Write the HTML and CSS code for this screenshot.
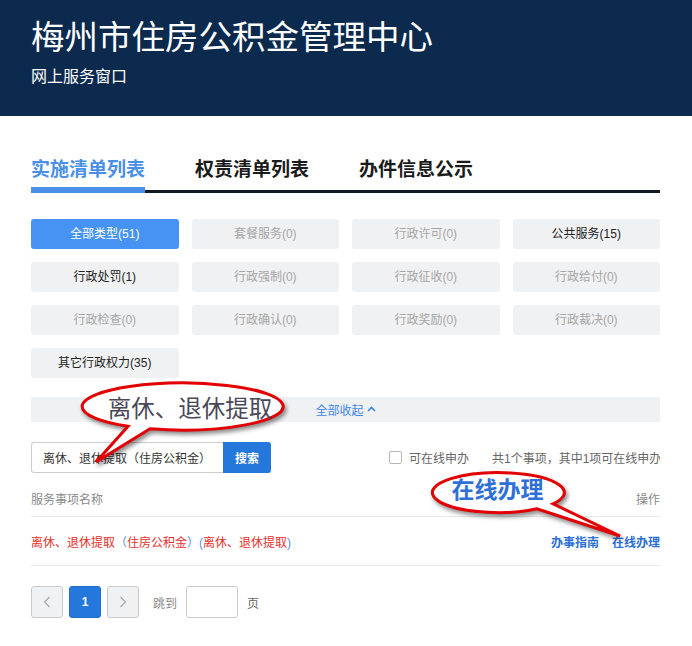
FILE: index.html
```html
<!DOCTYPE html>
<html lang="zh-CN">
<head>
<meta charset="utf-8">
<title>梅州市住房公积金管理中心 - 网上服务窗口</title>
<link rel="stylesheet" href="styles.css">
</head>
<body>
<header class="site-header">
  <h1 class="site-title">梅州市住房公积金管理中心</h1>
  <p class="site-sub">网上服务窗口</p>
</header>
<main class="main">
  <nav class="tabs">
    <a class="tab active">实施清单列表</a>
    <a class="tab">权责清单列表</a>
    <a class="tab">办件信息公示</a>
  </nav>
  <div class="filters">
    <button class="chip active">全部类型(51)</button>
    <button class="chip off">套餐服务(0)</button>
    <button class="chip off">行政许可(0)</button>
    <button class="chip">公共服务(15)</button>
    <button class="chip">行政处罚(1)</button>
    <button class="chip off">行政强制(0)</button>
    <button class="chip off">行政征收(0)</button>
    <button class="chip off">行政给付(0)</button>
    <button class="chip off">行政检查(0)</button>
    <button class="chip off">行政确认(0)</button>
    <button class="chip off">行政奖励(0)</button>
    <button class="chip off">行政裁决(0)</button>
    <button class="chip">其它行政权力(35)</button>
  </div>
  <div class="collapse">全部收起<svg class="chev-up" width="9" height="6" viewBox="0 0 9 6"><path d="M1 5 L4.5 1.5 L8 5" fill="none" stroke="currentColor" stroke-width="1.6"/></svg></div>
  <div class="search-row">
    <div class="search">
      <input class="search-input" type="text" value="离休、退休提取（住房公积金）" readonly>
      <button class="search-btn">搜索</button>
    </div>
    <div class="search-meta">
      <label class="check"><span class="box"></span>可在线申办</label>
      <span class="count">共1个事项，其中1项可在线申办</span>
    </div>
  </div>
  <div class="table">
    <div class="thead"><span>服务事项名称</span><span>操作</span></div>
    <div class="trow">
      <span class="name">离休、退休提取<span class="paren">（</span>住房公积金<span class="paren">）(</span>离休、退休提取<span class="paren">)</span></span>
      <span class="ops"><a class="op">办事指南</a><a class="op">在线办理</a></span>
    </div>
  </div>
  <div class="pager">
    <button class="pg-btn"><svg width="8" height="12" viewBox="0 0 8 12"><path d="M6.5 1 L1.5 6 L6.5 11" fill="none" stroke="#a8a8a8" stroke-width="1.2"/></svg></button>
    <button class="pg-btn current">1</button>
    <button class="pg-btn"><svg width="8" height="12" viewBox="0 0 8 12"><path d="M1.5 1 L6.5 6 L1.5 11" fill="none" stroke="#a8a8a8" stroke-width="1.2"/></svg></button>
    <span class="jump">跳到</span>
    <input class="pg-input" type="text" value="">
    <span class="page-unit">页</span>
  </div>
</main>
<svg class="callouts" width="692" height="646" viewBox="0 0 692 646">
  <g class="bubble">
    <path d="M150 428.8 A100.5 23.5 0 1 0 128 426.3 L96 462 Z" fill="#fff" stroke="#e30000" stroke-width="3" stroke-linejoin="miter"/>
  </g>
  <text class="bubble-text-1" x="190" y="416.5" text-anchor="middle">离休、退休提取</text>
  <g class="bubble">
    <path d="M553 503.8 A66 20 0 1 0 537 508.8 L620 536 Z" fill="#fff" stroke="#e30000" stroke-width="3" stroke-linejoin="miter"/>
  </g>
  <text class="bubble-text-2" x="497.5" y="498" text-anchor="middle">在线办理</text>
</svg>
</body>
</html>
```
FILE: styles.css
```css
* { box-sizing: border-box; }
html, body { margin: 0; padding: 0; }
body {
  position: relative;
  width: 692px;
  height: 646px;
  overflow: hidden;
  background: #fff;
  color: #333;
  font-family: "Liberation Sans", "Noto Sans CJK SC", sans-serif;
  font-size: 12px;
}
button, input { font-family: inherit; }

.site-header {
  height: 116px;
  background: #0b2a4e;
  color: #fff;
  padding: 15px 31px 0;
}
.site-title {
  margin: 0;
  font-family: "Noto Sans CJK SC", sans-serif;
  font-size: 33.5px;
  line-height: 40px;
  font-weight: 400;
}
.site-sub {
  margin: 10px 0 0;
  font-family: "Noto Sans CJK SC", sans-serif;
  font-size: 16px;
  line-height: 20px;
}

.main { padding: 40px 32px 0 31px; }

.tabs {
  display: flex;
  gap: 50px;
  border-bottom: 3px solid #141a24;
}
.tab {
  font-family: "Noto Sans CJK SC", sans-serif;
  font-size: 19px;
  line-height: 24px;
  font-weight: 700;
  color: #1b1b1b;
  padding-bottom: 7px;
  border-bottom: 6px solid transparent;
  margin-bottom: -3px;
}
.tab.active { color: #4a90e6; border-bottom-color: #4a90e6; }

.filters {
  margin-top: 26px;
  display: grid;
  grid-template-columns: repeat(4, 1fr);
  gap: 13px;
}
.chip {
  height: 30px;
  border: 0;
  border-radius: 3px;
  background: #f0f1f3;
  color: #222;
  font-size: 12px;
  line-height: 30px;
  padding: 0;
}
.chip.off { color: #a6a6a6; }
.chip.active { background: #4693f4; color: #fff; }

.collapse {
  margin-top: 19px;
  height: 25px;
  background: #f0f1f3;
  display: flex;
  align-items: center;
  justify-content: center;
  gap: 3px;
  color: #3d86e8;
  font-size: 12px;
}
.chev-up { margin-top: -1px; }

.search-row {
  margin-top: 20px;
  display: flex;
  align-items: center;
  overflow: hidden;
}
.search { display: flex; }
.search-input {
  width: 192px;
  height: 31px;
  border: 1px solid #cdcdcd;
  border-right: 0;
  border-radius: 3px 0 0 3px;
  padding: 0 0 0 11px;
  font-size: 12px;
  color: #333;
  outline: none;
}
.search-btn {
  width: 48px;
  height: 31px;
  border: 0;
  border-radius: 0 3px 3px 0;
  background: #2477db;
  color: #fff;
  font-weight: 700;
  font-size: 12px;
  padding: 0;
}
.search-meta {
  margin-left: auto;
  display: flex;
  align-items: center;
  color: #666;
  font-size: 12px;
  white-space: nowrap;
  min-width: 0;
}
.check { display: flex; align-items: center; gap: 7px; }
.box {
  width: 13px;
  height: 13px;
  border: 1px solid #b8b8b8;
  border-radius: 2px;
  background: #fff;
}
.count {
  margin-left: 23px;
  width: 168px;
  overflow: hidden;
}

.table { margin-top: 11px; }
.thead {
  display: flex;
  justify-content: space-between;
  line-height: 32px;
  color: #8a8a8a;
  border-bottom: 1px solid #e8e8e8;
}
.trow {
  display: flex;
  justify-content: space-between;
  align-items: center;
  height: 49px;
  border-bottom: 1px solid #e8e8e8;
}
.name { color: #e8302c; }
.paren { color: #5a8ee8; }
.ops { display: flex; gap: 13px; }
.op { color: #2a6fd6; font-weight: 700; }

.pager {
  margin-top: 20px;
  display: flex;
  align-items: center;
}
.pg-btn {
  width: 32px;
  height: 32px;
  margin-right: 6px;
  border: 1px solid #cacaca;
  border-radius: 3px;
  background: #f0f1f3;
  padding: 0;
  display: flex;
  align-items: center;
  justify-content: center;
  color: #fff;
  font-size: 12px;
  font-weight: 700;
}
.pg-btn.current { background: #2477db; border-color: #1f6cc9; }
.jump { margin-left: 8px; color: #8a8a8a; }
.pg-input {
  margin-left: 9px;
  width: 52px;
  height: 32px;
  border: 1px solid #cacaca;
  border-radius: 3px;
  background: #fff;
  outline: none;
}
.page-unit { margin-left: 9px; color: #666; }

.callouts {
  position: absolute;
  left: 0;
  top: 0;
  pointer-events: none;
}
.bubble { filter: drop-shadow(2px 3px 2px rgba(0, 0, 0, 0.45)); }
.bubble-text-1 {
  font-family: "Noto Sans CJK SC", sans-serif;
  font-size: 23.5px;
  fill: #4a4858;
}
.bubble-text-2 {
  font-family: "Noto Sans CJK SC", sans-serif;
  font-size: 23px;
  font-weight: 700;
  fill: #2f6fd8;
}
```
